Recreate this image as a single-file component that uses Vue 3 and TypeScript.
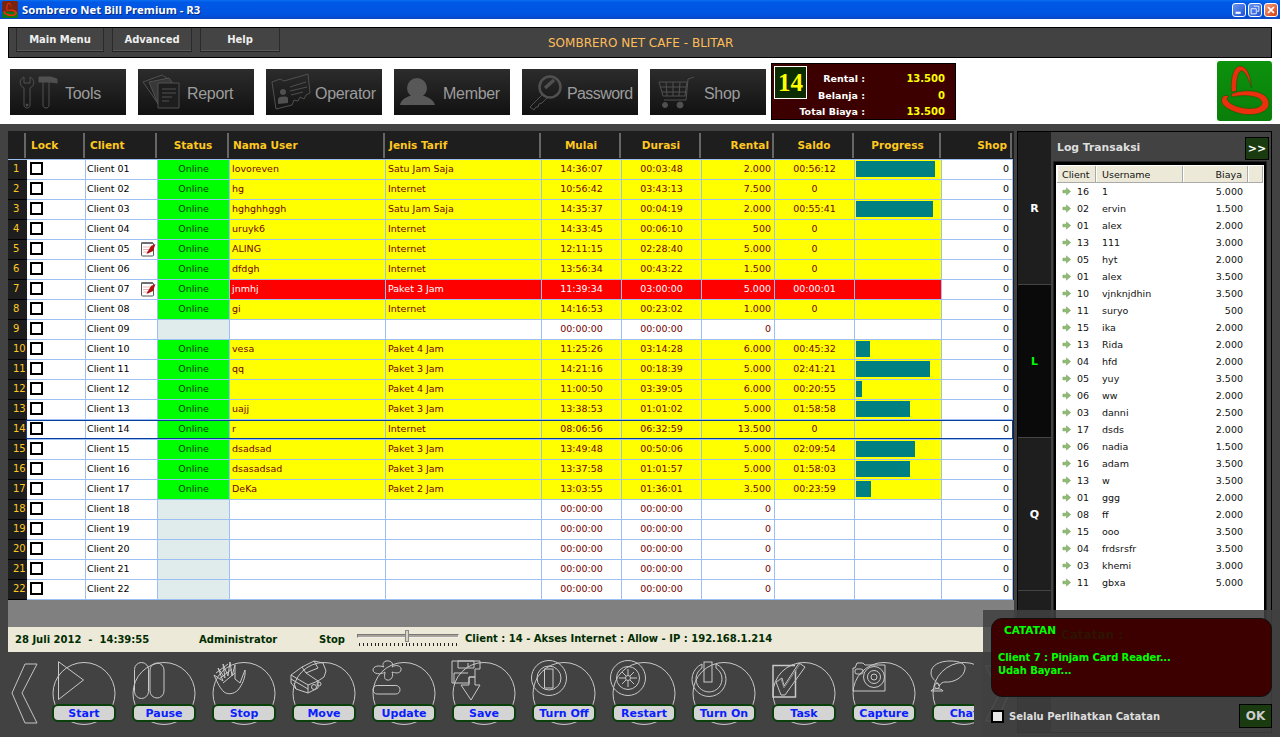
<script setup lang="ts">
interface Row { user: string; tarif: string; start: string; dur: string; rental: string; saldo: string; prog: number; online: boolean; note?: boolean; red?: boolean; sel?: boolean }
const on = (user: string, tarif: string, start: string, dur: string, rental: string, saldo: string, prog = 0, extra: Partial<Row> = {}): Row =>
  ({ user, tarif, start, dur, rental, saldo, prog, online: true, ...extra })
const off = (): Row => ({ user: '', tarif: '', start: '00:00:00', dur: '00:00:00', rental: '0', saldo: '', prog: 0, online: false })
const rows: Row[] = [
  on('lovoreven', 'Satu Jam Saja', '14:36:07', '00:03:48', '2.000', '00:56:12', 79),
  on('hg', 'Internet', '10:56:42', '03:43:13', '7.500', '0'),
  on('hghghhggh', 'Satu Jam Saja', '14:35:37', '00:04:19', '2.000', '00:55:41', 77),
  on('uruyk6', 'Internet', '14:33:45', '00:06:10', '500', '0'),
  on('ALING', 'Internet', '12:11:15', '02:28:40', '5.000', '0', 0, { note: true }),
  on('dfdgh', 'Internet', '13:56:34', '00:43:22', '1.500', '0'),
  on('jnmhj', 'Paket 3 Jam', '11:39:34', '03:00:00', '5.000', '00:00:01', 0, { note: true, red: true }),
  on('gi', 'Internet', '14:16:53', '00:23:02', '1.000', '0'),
  off(),
  on('vesa', 'Paket 4 Jam', '11:25:26', '03:14:28', '6.000', '00:45:32', 14),
  on('qq', 'Paket 3 Jam', '14:21:16', '00:18:39', '5.000', '02:41:21', 74),
  on('', 'Paket 4 Jam', '11:00:50', '03:39:05', '6.000', '00:20:55', 6),
  on('uajj', 'Paket 3 Jam', '13:38:53', '01:01:02', '5.000', '01:58:58', 54),
  on('r', 'Internet', '08:06:56', '06:32:59', '13.500', '0', 0, { sel: true }),
  on('dsadsad', 'Paket 3 Jam', '13:49:48', '00:50:06', '5.000', '02:09:54', 59),
  on('dsasadsad', 'Paket 3 Jam', '13:37:58', '01:01:57', '5.000', '01:58:03', 54),
  on('DeKa', 'Paket 2 Jam', '13:03:55', '01:36:01', '3.500', '00:23:59', 15),
  off(), off(), off(), off(), off(),
]
const pad = (n: number) => String(n).padStart(2, '0')
const logs: [string, string, string][] = [
  ['16', '1', '5.000'], ['02', 'ervin', '1.500'], ['01', 'alex', '2.000'], ['13', '111', '3.000'],
  ['05', 'hyt', '2.000'], ['01', 'alex', '3.500'], ['10', 'vjnknjdhin', '3.500'], ['11', 'suryo', '500'],
  ['15', 'ika', '2.000'], ['13', 'Rida', '2.000'], ['04', 'hfd', '2.000'], ['05', 'yuy', '3.500'],
  ['06', 'ww', '2.000'], ['03', 'danni', '2.500'], ['17', 'dsds', '2.000'], ['06', 'nadia', '1.500'],
  ['16', 'adam', '3.500'], ['13', 'w', '3.500'], ['01', 'ggg', '2.000'], ['08', 'ff', '2.000'],
  ['15', 'ooo', '3.500'], ['04', 'frdsrsfr', '3.500'], ['03', 'khemi', '3.000'], ['11', 'gbxa', '5.000'],
]
const tools = ['Tools', 'Report', 'Operator', 'Member', 'Password', 'Shop']
const actions = ['Start', 'Pause', 'Stop', 'Move', 'Update', 'Save', 'Turn Off', 'Restart', 'Turn On', 'Task', 'Capture', 'Chat']
const ticks = Array.from({ length: 26 }, (_, i) => i)
</script>

<template>
  <div class="app">
    <header class="titlebar">
      <svg class="appicon" viewBox="0 0 55 60"><rect width="55" height="60" rx="4" fill="#7a2410" /><rect y="38" width="55" height="22" rx="4" fill="#0a7a1a" /><path d="M14.500 31C13 17 17 7 23 6C30 6 33 15 33.500 26C30 13 25 9 23 10C19 12 18 21 18.500 30Z" fill="#ea300c" /><path d="M14 33C28 27 52 29 52 43C51 54 30 56 18 51C8 47 3 43 5 37C6 34 10 34 12 35C9 37 9 41 19 45C30 49 45 48 45 42C45 35 28 33 15 36Z" fill="#ea300c" /></svg>
      <span class="apptitle">Sombrero Net Bill Premium - R3</span>
      <div class="winbtns">
        <span class="wb"><svg viewBox="0 0 14 14"><rect x="3" y="9" width="6" height="2.500" fill="#fff" /></svg></span>
        <span class="wb"><svg viewBox="0 0 14 14"><path d="M5.500 2.500h6v6h-2M2.500 5.500h6v6h-6z" fill="none" stroke="#fff" /></svg></span>
        <span class="wb close"><svg viewBox="0 0 14 14"><path d="M3.500 3.500l7 7M10.500 3.500l-7 7" stroke="#fff" stroke-width="2" /></svg></span>
      </div>
    </header>

    <section class="top">
      <nav class="menubar">
        <div class="mbtn b1">Main Menu</div>
        <div class="mbtn b2">Advanced</div>
        <div class="mbtn b3">Help</div>
        <div class="cafe">SOMBRERO NET CAFE - BLITAR</div>
      </nav>
      <div class="toolrow">
        <div v-for="t in tools" :key="t" class="tool">
          <svg class="toolicon" viewBox="0 0 50 46" fill="none" stroke="#505050" stroke-width="1">
            <template v-if="t === 'Tools'">
              <path d="M11 8C6 10 6 17 11 19V36C11 40 17 40 17 36V19C22 17 22 10 17 8V14H11Z" />
              <circle cx="14" cy="36" r="1" fill="#505050" />
              <path d="M30 13V36C30 40 36 40 36 36V13" />
              <path d="M26 8H38L44 10V14L38 13H26Z" fill="#505050" />
            </template>
            <template v-else-if="t === 'Report'">
              <path d="M2 13L21 6L29 11L18 36Z" />
              <path d="M8 13L28 9L31 13V35H17Z" fill="#383838" />
              <path d="M17 14H38V39H17Z" fill="#1e1e1e" />
              <path d="M21 20H35M21 24H35M21 28H31M21 32H28" />
            </template>
            <template v-else-if="t === 'Operator'">
              <path d="M3 13L11 10L15 12L39 5L41 24L37 26L35 30L31 28L29 32L25 31L23 36L7 40Z" />
              <circle cx="14" cy="23" r="3" fill="#505050" stroke="none" />
              <path d="M9 35V30C10 27 18 27 19 29V34Z" fill="#505050" stroke="none" />
              <path d="M21 18L37 13M21 22L38 18M22 26L34 23" />
            </template>
            <template v-else-if="t === 'Member'">
              <circle cx="20" cy="19" r="10" fill="#585858" stroke="none" />
              <path d="M3 36C4 29 13 26 20 26C27 26 36 29 38 36Z" fill="#585858" stroke="none" />
            </template>
            <template v-else-if="t === 'Password'">
              <circle cx="25" cy="18" r="10.500" stroke-width="2.500" />
              <path d="M20 19L29 11" stroke-width="3.500" />
              <path d="M18 25L5 38L9 41L11 38L13 38L14 35L17 34L23 28" />
            </template>
            <template v-else>
              <path d="M41 8L35 10L33 31H11" />
              <path d="M6 13H34L32 27H10Z" />
              <path d="M13 13L14 27M20 13V27M27 13L26 27M7 18H33M9 23H32" />
              <circle cx="12" cy="36" r="2.500" fill="#505050" />
              <circle cx="27" cy="36" r="3" fill="#505050" />
            </template>
          </svg>
          <span class="toollabel" :class="'t-' + t">{{ t }}</span>
        </div>
        <div class="info">
          <div class="num">14</div>
          <div class="sums">
            <span class="lbl">Rental :</span><span class="val">13.500</span>
            <span class="lbl">Belanja :</span><span class="val">0</span>
            <span class="lbl">Total Biaya :</span><span class="val">13.500</span>
          </div>
        </div>
        <svg class="logo" viewBox="0 0 55 60">
          <defs>
            <linearGradient id="lg" x1="0" y1="0" x2="0" y2="1"><stop offset="0" stop-color="#0c920c" /><stop offset="1" stop-color="#0a7e0a" /></linearGradient>
          </defs>
          <rect width="55" height="60" rx="3" fill="url(#lg)" />
          <path d="M14.500 31C13 17 17 5 23 5C30 5 34 15 34.500 27C30 13 26 9 24 10C20 12 19.500 21 19.500 30Z" fill="#e8300c" stroke="#0a5a0a" stroke-width=".6" />
          <path d="M14 33C28 27 52 29 52 43C51 54 30 56 18 51C8 47 3 43 5 37C6 34 10 34 12 35C9 37 9 41 19 45C30 49 45 48 45 42C45 35 28 33 15 36Z" fill="#ea300c" stroke="#0a5a0a" stroke-width=".6" />
        </svg>
      </div>
    </section>

    <main class="main">
      <div class="leftcol">
        <div class="grid">
          <div class="ghead">
            <div class="hc"></div>
            <div class="hc sh">Lock</div>
            <div class="hc sh">Client</div>
            <div class="hc c">Status</div>
            <div class="hc">Nama User</div>
            <div class="hc">Jenis Tarif</div>
            <div class="hc c">Mulai</div>
            <div class="hc c">Durasi</div>
            <div class="hc r">Rental</div>
            <div class="hc c">Saldo</div>
            <div class="hc c">Progress</div>
            <div class="hc r">Shop</div>
          </div>
          <div v-for="(row, i) in rows" :key="i" class="grow" :class="{ red: row.red, sel: row.sel, active: row.online }">
            <div class="idx">{{ i + 1 }}</div>
            <div class="cell"><span class="chk"></span></div>
            <div class="cell client">
              <span>Client {{ pad(i + 1) }}</span>
              <svg v-if="row.note" class="note" viewBox="0 0 16 16">
                <rect x="1.500" y="2" width="12" height="13" rx="1" fill="#fff" stroke="#555" />
                <path d="M1.500 2h12" stroke="#333" stroke-dasharray="1 1" stroke-width="2" />
                <path d="M3 6h7M3 8.500h6M3 11h5" stroke="#e8b8b8" />
                <path d="M15.500 3L11 5L6.500 12.500L8 12.500L13 10Z" fill="#b01010" />
              </svg>
            </div>
            <div class="cell c status" :class="{ online: row.online }">{{ row.online ? 'Online' : '' }}</div>
            <div class="cell data lp">{{ row.user }}</div>
            <div class="cell data lp">{{ row.tarif }}</div>
            <div class="cell data c">{{ row.start }}</div>
            <div class="cell data c">{{ row.dur }}</div>
            <div class="cell data r">{{ row.rental }}</div>
            <div class="cell data c">{{ row.saldo }}</div>
            <div class="cell data prog"><span v-if="row.prog" class="bar" :style="{ width: row.prog + 'px' }"></span></div>
            <div class="cell r shop">0</div>
          </div>
        </div>
        <div class="gray"></div>
        <div class="statusbar">
          <span class="s-date">28 Juli 2012&nbsp; - &nbsp;14:39:55</span>
          <span class="s-admin">Administrator</span>
          <span class="s-stop">Stop</span>
          <div class="slider">
            <div class="track"><span class="thumb"></span></div>
            <div class="ticks"><i v-for="k in ticks" :key="k"></i></div>
          </div>
          <span class="s-client">Client : 14 - Akses Internet : Allow - IP : 192.168.1.214</span>
        </div>
        <div class="toolbar">
          <svg class="chev" viewBox="0 0 30 62" fill="none" stroke="#c4c4c4"><path d="M1 30L14 1H26L11 30L26 60H14Z" /></svg>
          <div class="slots">
            <div v-for="a in actions" :key="a" class="slot">
              <svg class="slotart" viewBox="0 0 80 75" fill="none" stroke="#c8c8c8" stroke-width="1">
                <circle cx="40" cy="38.500" r="31" />
                <path v-if="a === 'Start'" d="M14.500 6.700L39.500 25L14.500 44.500Z" />
                <template v-else-if="a === 'Pause'">
                  <rect x="10.500" y="7.500" width="14" height="36" rx="7" />
                  <rect x="26" y="8" width="14" height="35" rx="7" />
                </template>
                <template v-else-if="a === 'Stop'">
                  <path d="M10 20L19 26L14 13L21 23L19 9L24 21L26 7L28 21L31 10L31 24L36 28L41 15C42 22 38 30 34 35C30 39 24 40 20 37C16 33 14 29 10 20Z" />
                  <path d="M12 18L24 9M15 24L28 14M19 28L31 18" />
                </template>
                <template v-else-if="a === 'Move'">
                  <path d="M7 20L18 12L30 6L39 8L42 16L40 22L34 26L34 33L24 38L12 34L7 28Z" />
                  <path d="M18 12L22 18L34 13L30 6M22 18L34 26M7 20L24 30L34 26M24 30V38M7 24L24 34M10 28L12 34" />
                  <circle cx="30" cy="32" r="2.500" /><circle cx="35" cy="29" r="2" />
                </template>
                <template v-else-if="a === 'Update'">
                  <path d="M22 6C28 5 30 10 28 12C32 9 38 11 37 15C36 19 31 18 28 17C30 21 27 26 23 25C19 24 21 19 21 17C17 20 9 19 9 15C9 11 15 10 20 12C18 10 19 7 22 6Z" />
                  <rect x="9" y="30.500" width="27" height="8.500" rx="4.200" />
                </template>
                <template v-else-if="a === 'Save'">
                  <path d="M8 6H36V14H31V22H25V28H8Z" />
                  <path d="M14 6H30V13H14ZM24 8V12M10 28V18H24" />
                  <path d="M25 22H31V30H36L27 45L17 30H25Z" />
                </template>
                <template v-else-if="a === 'Turn Off'">
                  <circle cx="25" cy="23" r="17.500" /><circle cx="25" cy="23" r="12" />
                  <rect x="20.500" y="14" width="8.500" height="19" />
                </template>
                <template v-else-if="a === 'Restart'">
                  <circle cx="24" cy="23" r="17.500" /><circle cx="24" cy="23" r="11.500" /><circle cx="24" cy="23" r="2.500" />
                  <path d="M24 14V20M24 26V32M15 23H21M27 23H33M18 17L22 21M26 25L30 29M30 17L26 21M22 25L18 29" />
                </template>
                <template v-else-if="a === 'Turn On'">
                  <path d="M18 9A17 17 0 1 0 32 9V13A13 13 0 1 1 18 13Z" />
                  <rect x="20" y="7" width="8" height="20" />
                </template>
                <template v-else-if="a === 'Task'">
                  <path d="M31.500 15V42H9V10.500H31" stroke-width="1.500" />
                  <path d="M12 27L18 23L20 31L35 8L41 12L21 40H17Z" />
                  <path d="M13 27L17 24L20 33L36 9" stroke="#888" />
                </template>
                <template v-else-if="a === 'Capture'">
                  <path d="M9 13H11L13 8H19L21 10H41V36H9Z" />
                  <rect x="11" y="14" width="8" height="5" rx="2" />
                  <circle cx="30" cy="22" r="10.500" /><circle cx="30" cy="22" r="6.500" /><circle cx="30" cy="22" r="3" />
                </template>
                <template v-else-if="a === 'Chat'">
                  <path d="M7 18C7 10 16 6 26 6C36 6 42 9 41 14C40 22 30 28 21 27C19 27 17 28 15 31C15 27 7 25 7 18Z" />
                  <circle cx="13" cy="31" r="2.500" />
                  <path d="M7 36C8 33 18 33 19 36Z" />
                </template>
              </svg>
              <div class="pill">{{ a }}</div>
            </div>
          </div>
          <svg class="chev-r" viewBox="0 0 30 62" fill="none" stroke="#c4c4c4"><path d="M29 30L16 1H4L19 30L4 60H16Z" /></svg>
        </div>
      </div>

      <aside class="rightcol">
        <div class="strip">
          <div class="tab">R</div>
          <div class="tab act">L</div>
          <div class="tab">Q</div>
          <div class="tab blank"></div>
        </div>
        <div class="logpanel">
          <div class="loghead">
            <span class="logtitle">Log Transaksi</span>
            <span class="expand">&gt;&gt;</span>
          </div>
          <div class="list">
            <div class="lhead">
              <span class="lh w1">Client</span>
              <span class="lh w2">Username</span>
              <span class="lh w3">Biaya</span>
              <span class="lh w4"></span>
            </div>
            <div v-for="(l, i) in logs" :key="i" class="lrow">
              <svg class="arrow" viewBox="0 0 10 10"><path d="M1 3.500H5V1L9.500 5L5 9V6.500H1Z" fill="#8fbb70" stroke="#5f9348" stroke-width=".5" /></svg>
              <span class="lc">{{ l[0] }}</span>
              <span class="lu">{{ l[1] }}</span>
              <span class="lb">{{ l[2] }}</span>
            </div>
          </div>
        </div>
      </aside>
    </main>

    <div class="overlay">
      <div class="notebox">
        <div class="notehead"><span class="ntitle">CATATAN</span><span class="nfaint">Catatan :</span></div>
        <div class="notemsg">Client 7 : Pinjam Card Reader...<br />Udah Bayar...</div>
      </div>
      <div class="notefoot">
        <span class="nchk"></span>
        <span class="ntext">Selalu Perlihatkan Catatan</span>
        <span class="okbtn">OK</span>
      </div>
    </div>
  </div>
</template>

<style scoped>
.app { width: 1280px; height: 737px; position: relative; overflow: hidden; background: #fff; font-family: "DejaVu Sans", Tahoma, sans-serif; font-size: 9.5px; display: flex; flex-direction: column; }

.titlebar { height: 19px; flex: none; display: flex; align-items: center; padding: 0 2px 0 2px; box-sizing: border-box; background: linear-gradient(#0a70f0 0, #0058e6 12%, #0054e0 75%, #0a48c8 100%); }
.appicon { width: 16px; height: 17px; }
.apptitle { margin-left: 4px; color: #fff; font: bold 11.300px "Open Sans", sans-serif; text-shadow: 1px 1px #0a2a80; }
.winbtns { margin-left: auto; display: flex; gap: 2px; }
.wb { width: 14px; height: 14px; border: 1px solid #fff; border-radius: 3px; box-sizing: border-box; background: linear-gradient(135deg, #6a96f0, #1c50d8); display: block; }
.wb svg { display: block; width: 12px; height: 12px; }
.wb.close { background: linear-gradient(135deg, #f0a080, #d83c10); }

.top { height: 105px; flex: none; box-sizing: border-box; padding: 8px 8px 0; background: #fff; }
.menubar { height: 31px; box-sizing: border-box; border: 1px solid #000; background: #424242; display: flex; align-items: flex-start; padding-left: 7px; }
.mbtn { height: 24px; box-sizing: border-box; border: 1px solid #2a2a2a; border-top: 0; border-bottom-color: #222; box-shadow: inset 0 -1px #5a5a5a; background: #444; color: #eee; font-weight: bold; font-size: 10px; display: flex; align-items: center; justify-content: center; }
.b1 { width: 88px; }
.b2 { width: 80px; margin-left: 8px; }
.b3 { width: 80px; margin-left: 8px; }
.cafe { margin-left: 268px; margin-top: 8px; color: #ffbe5a; font-size: 12px; font-family: "DejaVu Sans", sans-serif; line-height: 14px; }

.toolrow { height: 60px; margin-top: 3px; display: flex; align-items: center; padding-left: 2px; }
.tool { width: 116px; height: 46px; margin-right: 12px; margin-top: 2px; flex: none; display: flex; align-items: center; background: linear-gradient(#2c2c2c, #111); position: relative; }
.tool:nth-child(6) { margin-right: 5px; }
.toolicon { width: 50px; height: 46px; flex: none; margin-left: 3px; }
.toollabel { color: #9c9c9c; font: 16px/20px "Liberation Sans", sans-serif; letter-spacing: -.3px; margin-left: 2px; margin-top: 3px; }
.t-Tools { margin-left: 2px; }
.t-Member { margin-left: -4px; }
.t-Password { margin-left: -8px; letter-spacing: -.6px; }
.t-Operator { margin-left: -4px; }
.t-Report { margin-left: -4px; }
.t-Shop { margin-left: 1px; }

.info { width: 185px; height: 57px; box-sizing: border-box; border: 1px solid #000; background: #3c0000; display: flex; padding: 2px; flex: none; }
.num { width: 33px; height: 33px; box-sizing: border-box; border: 1px solid #fff; background: #0a2c00; color: #ff0; font: bold 25px/31px "Liberation Serif", serif; text-align: center; flex: none; }
.sums { flex: 1; min-width: 0; display: grid; grid-template-columns: minmax(0, 1fr) 80px; grid-auto-rows: 16.500px; align-items: center; padding: 5px 8px 0 0; }
.lbl { justify-self: end; color: #fff; font-weight: bold; font-size: 9.500px; white-space: nowrap; }
.val { text-align: right; color: #ff0; font-weight: bold; font-size: 10px; }
.logo { width: 55px; height: 60px; margin-left: auto; flex: none; }

.main { flex: 1; min-height: 0; background: #424242; display: flex; padding: 7px 0 0 8px; box-sizing: border-box; }
.leftcol { width: 1006px; flex: none; display: flex; flex-direction: column; }
.grid { flex: none; background: #1e1e1e; }
.ghead, .grow { display: grid; grid-template-columns: 19px 59px 72px 72px 156px 156px 80px 80px 73px 80px 87px 71px; width: 1005px; }
.ghead { height: 28px; border-bottom: 1px solid #9cc0f4; }
.hc { color: #ffc820; font-weight: bold; font-size: 10.500px; line-height: 29px; padding: 0 3px; box-sizing: border-box; position: relative; border-right: 2px solid transparent; white-space: nowrap; }
.hc.sh { padding-left: 4px; }
.hc::after { content: ""; position: absolute; right: -1px; top: 2px; bottom: 2px; width: 2px; background: #666; }
.hc.c { text-align: center; }
.hc.r { text-align: right; padding-right: 4px; }
.grow { height: 20px; box-sizing: border-box; position: relative; }
.grow.sel::after { content: ""; position: absolute; left: 18px; right: 0; top: 0; bottom: 1px; border: 1px solid #0a3c9c; pointer-events: none; }
.idx { background: #1e1e1e; color: #ffc820; font-size: 10px; line-height: 18px; padding-left: 5px; border-bottom: 1px solid #000; }
.cell { background: #fff; border-right: 1px solid #9cc0f4; border-bottom: 1px solid #9cc0f4; box-sizing: border-box; height: 20px; line-height: 18px; color: #000; white-space: nowrap; overflow: hidden; padding: 0 2px; }
.cell.c { text-align: center; }
.cell.r { text-align: right; padding-right: 3px; }
.chk { display: block; width: 13px; height: 13px; box-sizing: border-box; border: 2px solid #000; background: #fff; margin: 2px 0 0 1px; }
.client { display: flex; align-items: flex-start; justify-content: space-between; padding-left: 1px; padding-right: 1px; }
.note { width: 16px; height: 16px; flex: none; margin-top: 1px; }
.status { background: #e0ecec; color: #004000; }
.status.online { background: #0f0; }
.data { color: #760000; }
.lp { padding-left: 2px; }
.active .data { background: #ff0; }
.grow.red .data { background: #f00; color: #fff; }
.prog { padding: 1px 0 0 1px; }
.bar { display: block; height: 16px; background: #008080; }

.gray { height: 27px; flex: none; background: #808080; width: 1006px; }
.statusbar { height: 25px; flex: none; background: #ece9d8; color: #002c00; font-weight: bold; font-size: 10px; display: flex; align-items: center; padding-left: 7px; }
.s-date { width: 184px; }
.s-admin { width: 120px; }
.s-stop { width: 38px; }
.slider { width: 102px; height: 22px; margin-top: -2px; display: flex; flex-direction: column; }
.track { height: 4px; margin-top: 6px; background: #a8a598; border: 1px solid #eee; border-left-color: #777; border-top-color: #777; position: relative; box-sizing: border-box; }
.thumb { position: absolute; left: 47px; top: -5px; width: 4px; height: 12px; background: #d8d4c4; border: 1px solid #888; box-sizing: border-box; }
.ticks { display: flex; justify-content: space-between; margin-top: 5px; padding: 0 2px; }
.ticks i { width: 1px; height: 3px; background: #222; display: block; }
.s-client { margin-left: 6px; margin-top: -3px; }

.toolbar { flex: 1; display: flex; padding-top: 3px; box-sizing: border-box; position: relative; min-height: 0; }
.chev { width: 30px; height: 62px; margin: 8px 0 0 3px; flex: none; }
.slots { display: flex; width: 930px; margin-left: 3px; overflow: hidden; flex: none; }
.slot { width: 80px; height: 75px; flex: none; position: relative; }
.slotart { width: 80px; height: 75px; display: block; }
.pill { position: absolute; left: 8px; top: 49px; width: 64px; height: 18px; box-sizing: border-box; border: 2px solid #0a400a; border-radius: 6px; background: #d4d4d4; color: #0a1eff; font: bold 11px/16px "DejaVu Sans", sans-serif; text-align: center; white-space: nowrap; }
.chev-r { width: 28px; height: 62px; margin: 8px 0 0 8px; flex: none; }

.rightcol { flex: 1; display: flex; margin: 0 8px 4px 3px; border: 1px solid #000; min-width: 0; }
.strip { width: 33px; flex: none; display: flex; flex-direction: column; background: #1e1e1e; }
.tab { height: 153px; flex: none; display: flex; align-items: center; justify-content: center; color: #fff; font-weight: bold; font-size: 11px; border-bottom: 1px solid #444; box-sizing: border-box; }
.tab.act { background: #0a0a0a; color: #0f0; }
.tab.blank { flex: 1; border-bottom: 0; }
.logpanel { flex: 1; display: flex; flex-direction: column; background: #424242; padding: 0 5px 0 3px; min-width: 0; }
.loghead { height: 30px; flex: none; display: flex; align-items: center; padding: 0 0 0 3px; }
.logtitle { color: #ddd; font-weight: bold; font-size: 10.800px; }
.expand { margin-left: auto; width: 24px; height: 23px; margin-right: -3px; margin-top: 3px; box-sizing: border-box; border: 1px solid #000; background: #1a3a10; color: #fff; font-weight: bold; font-size: 11px; line-height: 21px; text-align: center; }
.list { height: 463px; flex: none; box-sizing: border-box; border: 1px solid #000; border-width: 3px 2px; background: #fff; padding: 1px 1px 0; outline: 1px solid #222; }
.lhead { display: flex; height: 16px; background: #ece9d8; border-bottom: 1px solid #aaa; color: #111; }
.lh { display: block; box-sizing: border-box; line-height: 18px; border-right: 1px solid #aaa; border-left: 1px solid #fff; padding: 0 5px; }
.w1 { width: 39px; padding: 0 4px; }
.w2 { width: 87px; }
.w3 { width: 65px; text-align: right; }
.w4 { flex: 1; }
.lrow { height: 17px; display: flex; align-items: center; position: relative; color: #111; }
.arrow { width: 9px; height: 9px; margin-left: 5px; flex: none; }
.lc { margin-left: 6px; width: 25px; }
.lu { flex: none; width: 100px; }
.lb { width: 41px; text-align: right; }

.overlay { position: absolute; left: 983px; top: 610px; width: 297px; height: 127px; background: rgba(64, 64, 64, .88); box-sizing: border-box; padding: 8px 8px 0 8px; z-index: 3; }
.notebox { height: 79px; width: 281px; box-sizing: border-box; border: 1px solid #111; border-radius: 11px; background: #3c0000; padding: 5px 6px; }
.notehead { display: flex; height: 20px; }
.ntitle { margin-left: 6px; color: #0f0; font-weight: bold; font-size: 10.500px; line-height: 13px; }
.nfaint { margin-left: 5px; margin-top: 4px; color: #2e1400; font-weight: bold; font-size: 12px; line-height: 15px; }
.notemsg { margin-top: 7px; color: #0f0; font-weight: bold; font-size: 10px; line-height: 13px; letter-spacing: -.1px; }
.notefoot { display: flex; align-items: center; margin-top: 7px; height: 24px; }
.nchk { width: 13px; height: 13px; box-sizing: border-box; border: 2px solid #000; background: #e8e8e8; flex: none; }
.ntext { margin-left: 5px; color: #ddd; font-weight: bold; font-size: 10px; }
.okbtn { margin-left: auto; width: 33px; height: 24px; box-sizing: border-box; border: 1px solid #000; background: #1a3a10; color: #ccc; font-weight: bold; font-size: 12px; line-height: 22px; text-align: center; }
</style>

<style>
body { margin: 0; overflow: hidden; }
</style>
